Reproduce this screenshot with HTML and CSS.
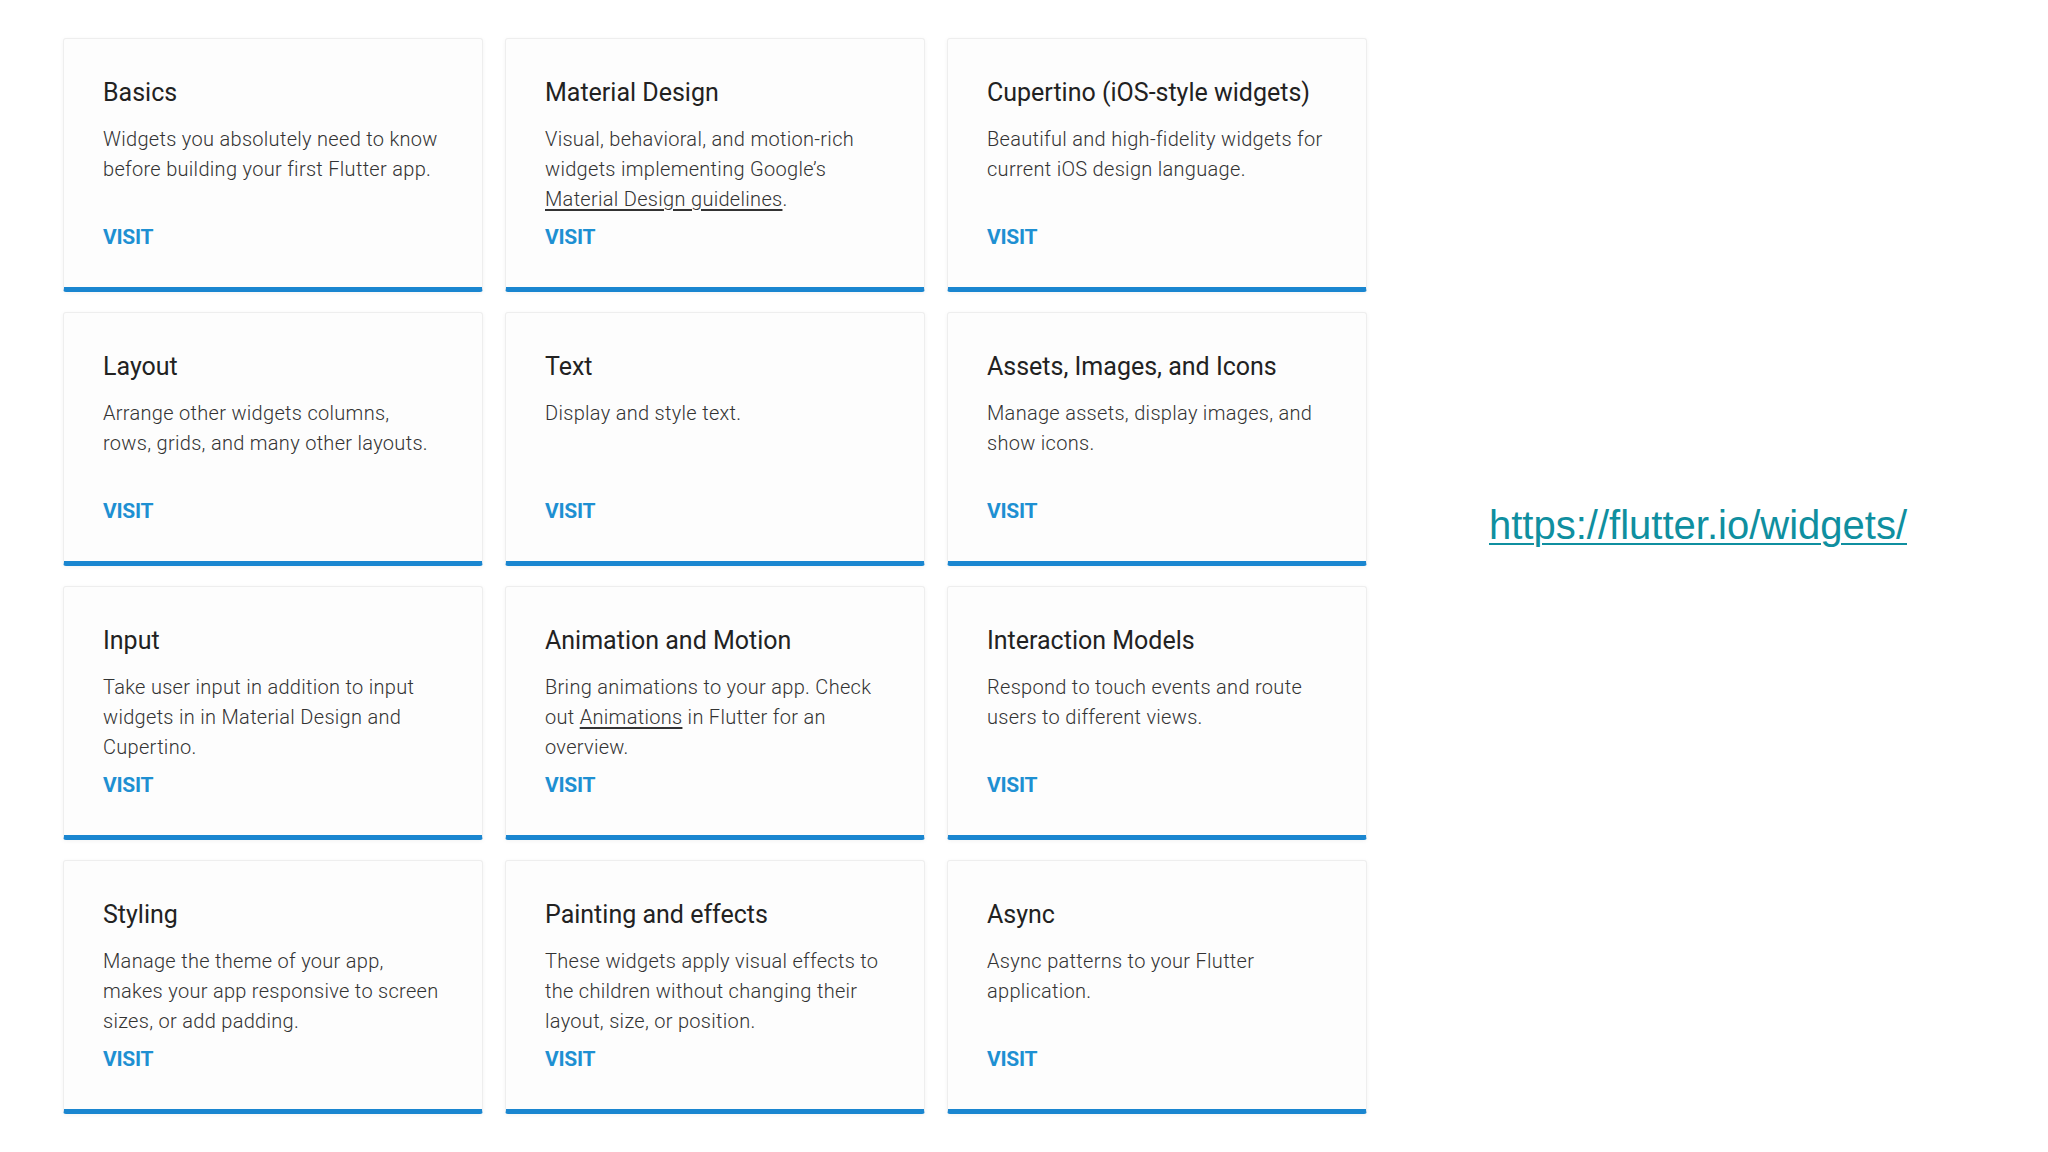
FILE: index.html
```html
<!DOCTYPE html>
<html lang="en">
<head>
<meta charset="utf-8">
<title>Flutter widgets</title>
<link rel="stylesheet" href="styles.css">
</head>
<body>
<main class="slide">
  <section class="grid">
    <article class="card">
      <h3 class="card-title">Basics</h3>
      <p class="card-desc">Widgets you absolutely need to know<br>before building your first Flutter app.</p>
      <a class="card-visit">VISIT</a>
    </article>
    <article class="card">
      <h3 class="card-title">Material Design</h3>
      <p class="card-desc">Visual, behavioral, and motion-rich<br>widgets implementing Google’s<br><u>Material Design guidelines</u>.</p>
      <a class="card-visit">VISIT</a>
    </article>
    <article class="card">
      <h3 class="card-title">Cupertino (iOS-style widgets)</h3>
      <p class="card-desc">Beautiful and high-fidelity widgets for<br>current iOS design language.</p>
      <a class="card-visit">VISIT</a>
    </article>

    <article class="card">
      <h3 class="card-title">Layout</h3>
      <p class="card-desc">Arrange other widgets columns,<br>rows, grids, and many other layouts.</p>
      <a class="card-visit">VISIT</a>
    </article>
    <article class="card">
      <h3 class="card-title">Text</h3>
      <p class="card-desc">Display and style text.</p>
      <a class="card-visit">VISIT</a>
    </article>
    <article class="card">
      <h3 class="card-title">Assets, Images, and Icons</h3>
      <p class="card-desc">Manage assets, display images, and<br>show icons.</p>
      <a class="card-visit">VISIT</a>
    </article>

    <article class="card">
      <h3 class="card-title">Input</h3>
      <p class="card-desc">Take user input in addition to input<br>widgets in in Material Design and<br>Cupertino.</p>
      <a class="card-visit">VISIT</a>
    </article>
    <article class="card">
      <h3 class="card-title">Animation and Motion</h3>
      <p class="card-desc">Bring animations to your app. Check<br>out <u>Animations</u> in Flutter for an<br>overview.</p>
      <a class="card-visit">VISIT</a>
    </article>
    <article class="card">
      <h3 class="card-title">Interaction Models</h3>
      <p class="card-desc">Respond to touch events and route<br>users to different views.</p>
      <a class="card-visit">VISIT</a>
    </article>

    <article class="card">
      <h3 class="card-title">Styling</h3>
      <p class="card-desc">Manage the theme of your app,<br>makes your app responsive to screen<br>sizes, or add padding.</p>
      <a class="card-visit">VISIT</a>
    </article>
    <article class="card">
      <h3 class="card-title">Painting and effects</h3>
      <p class="card-desc">These widgets apply visual effects to<br>the children without changing their<br>layout, size, or position.</p>
      <a class="card-visit">VISIT</a>
    </article>
    <article class="card">
      <h3 class="card-title">Async</h3>
      <p class="card-desc">Async patterns to your Flutter<br>application.</p>
      <a class="card-visit">VISIT</a>
    </article>
  </section>

  <aside class="side">
    <a class="side-link" href="#">https://flutter.io/widgets/</a>
  </aside>
</main>
</body>
</html>
```

FILE: styles.css
```css
html, body {
  margin: 0;
  padding: 0;
  background: #ffffff;
}

body {
  width: 2048px;
  height: 1152px;
  overflow: hidden;
}

.slide {
  display: flex;
  align-items: flex-start;
  padding: 38px 0 0 63px;
}

.grid {
  display: grid;
  grid-template-columns: repeat(3, 420px);
  grid-auto-rows: 254px;
  column-gap: 22px;
  row-gap: 20px;
}

.card {
  box-sizing: border-box;
  display: flex;
  flex-direction: column;
  padding: 38px 18px 0 39px;
  background: #fdfdfd;
  border: 1px solid #eeeeee;
  border-bottom: 5px solid #1a86d0;
  border-radius: 3px;
  box-shadow: 0 1px 4px rgba(0, 0, 0, 0.05);
  font-family: Roboto, "Liberation Sans", sans-serif;
}

.card-title {
  margin: 0;
  font-size: 25px;
  line-height: 32px;
  font-weight: 400;
  color: #222222;
}

.card-desc {
  margin: 15px 0 0;
  min-height: 90px;
  font-size: 20px;
  line-height: 30px;
  font-weight: 300;
  letter-spacing: 0.3px;
  color: #333333;
  white-space: nowrap;
}

.card-desc u {
  text-decoration-color: #333333;
  text-underline-offset: 3px;
}

.card-visit {
  margin-top: 11px;
  font-size: 21px;
  line-height: 24px;
  font-weight: 700;
  color: #1e90d2;
  letter-spacing: -0.3px;
}

.side {
  padding: 464px 0 0 122px;
}

.side-link {
  font-family: "Liberation Sans", Arial, sans-serif;
  font-size: 40px;
  line-height: 46px;
  color: #0f8fa0;
  text-decoration: underline;
  text-decoration-thickness: 2px;
  text-underline-offset: 4px;
}
```
